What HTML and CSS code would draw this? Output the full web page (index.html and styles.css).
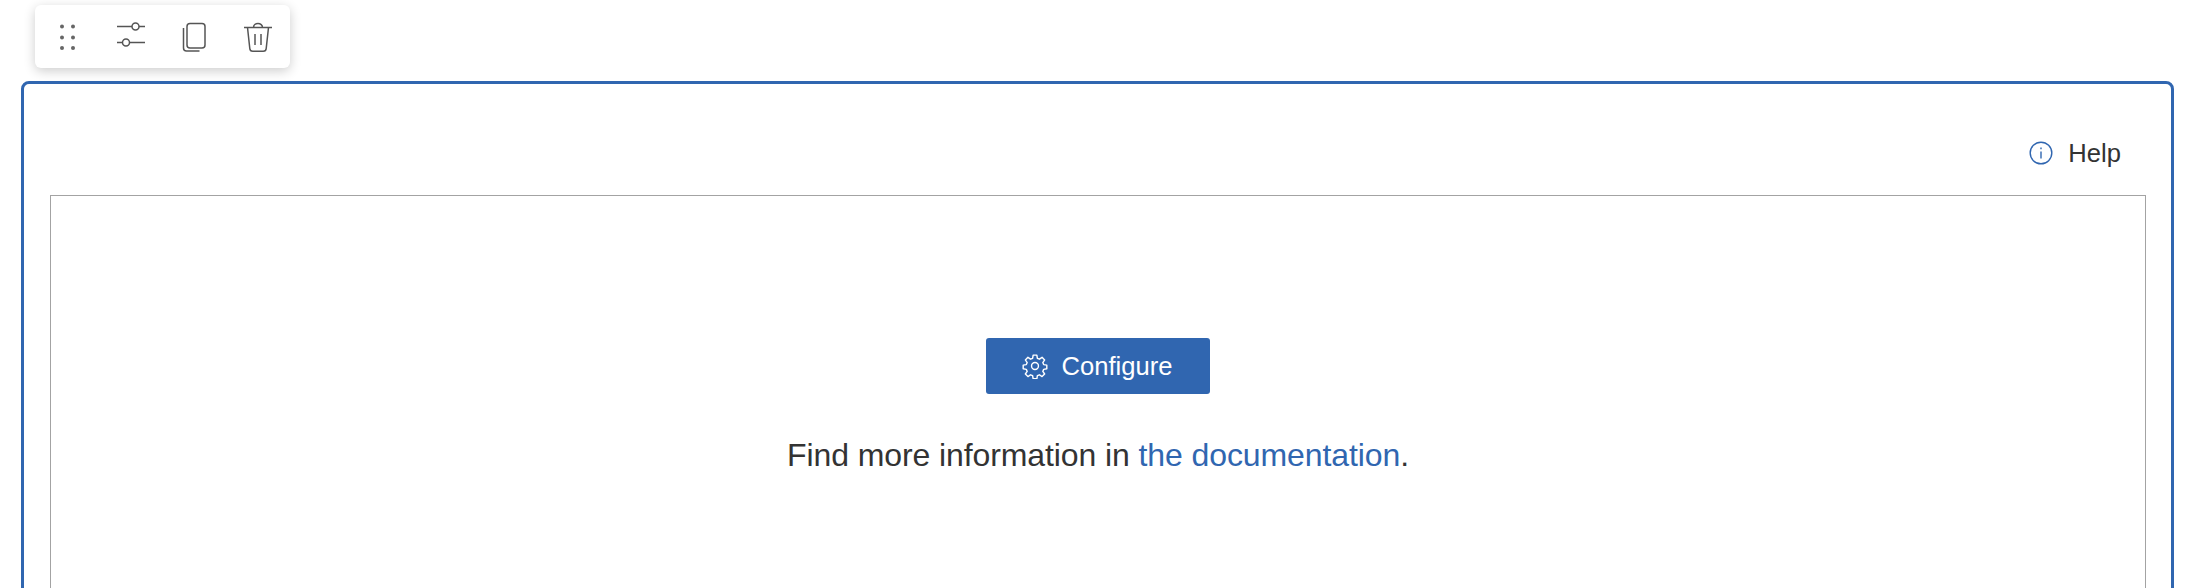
FILE: index.html
```html
<!DOCTYPE html>
<html lang="en">
<head>
    <meta charset="UTF-8">
    <title>Configure block</title>
    <link rel="stylesheet" href="styles.css">
</head>
<body>

    <!-- Block toolbar -->
    <div class="toolbar">
        <span class="tool">
            <svg width="32" height="32" viewBox="0 0 32 32" fill="#666">
                <circle cx="11" cy="5.500" r="2"/><circle cx="22" cy="5.500" r="2"/>
                <circle cx="11" cy="16.500" r="2"/><circle cx="22" cy="16.500" r="2"/>
                <circle cx="11" cy="27" r="2"/><circle cx="22" cy="27" r="2"/>
            </svg>
        </span>
        <span class="tool">
            <svg width="32" height="32" viewBox="0 0 32 32" fill="none" stroke="#555" stroke-width="1.5">
                <path d="M2 5.500h15M24 5.500h6M2 21.500h6M14 21.500h16"/>
                <circle cx="20.500" cy="5.500" r="3.500"/><circle cx="11" cy="21.500" r="3.500"/>
            </svg>
        </span>
        <span class="tool">
            <svg width="32" height="32" viewBox="0 0 32 32" fill="none" stroke="#555" stroke-width="1.5">
                <rect x="9" y="2.500" width="18" height="24.500" rx="3"/>
                <path d="M5.500 7v20a3 3 0 0 0 3 3h13"/>
            </svg>
        </span>
        <span class="tool">
            <svg width="32" height="32" viewBox="0 0 32 32" fill="none" stroke="#555" stroke-width="1.5">
                <path d="M2 6.500h28M11.500 6.500a4.500 4 0 0 1 9 0M5.500 6.500l2.300 21a3 3 0 0 0 3 2.800h10.400a3 3 0 0 0 3-2.800l2.300-21"/>
                <path d="M13 13v11M19 13v11"/>
            </svg>
        </span>
    </div>

    <!-- Block -->
    <div class="block">
        <div class="help-row">
            <a class="help">
                <svg width="24" height="24" viewBox="0 0 24 24" fill="none" stroke="#3066b0" stroke-width="1.4">
                    <circle cx="12" cy="12" r="10.800"/>
                    <path d="M12 10.500v7"/>
                    <path d="M12 6.500v1.800"/>
                </svg>
                <span>Help</span>
            </a>
        </div>
        <div class="preview">
            <button class="configure">
                <svg width="26" height="26" viewBox="0 0 24 24" fill="none" stroke="#fff" stroke-width="1.3" stroke-linejoin="round">
                    <circle cx="12" cy="12" r="3.200"/>
                    <path d="M10.300 2h3.400l.5 2.900 1.900.8 2.400-1.700 2.400 2.400-1.700 2.400.8 1.900 2.900.5v3.400l-2.900.5-.8 1.900 1.700 2.400-2.400 2.400-2.400-1.700-1.900.8-.5 2.900h-3.400l-.5-2.900-1.900-.8-2.400 1.700-2.400-2.400 1.700-2.400-.8-1.900-2.900-.5v-3.400l2.900-.5.8-1.900-1.700-2.400 2.400-2.400 2.400 1.700 1.900-.8z"/>
                </svg>
                <span>Configure</span>
            </button>
            <p class="more">Find more information in <a class="doc-link">the documentation</a>.</p>
        </div>
    </div>

</body>
</html>
```

FILE: styles.css
```css
html, body { height: 100%; overflow: hidden; }
body { margin: 0; background: #fff; color: #333; font-family: "Liberation Sans", Arial, sans-serif; }

.toolbar { display: grid; grid-template-columns: repeat(4, 1fr); align-items: center; width: 255px; height: 63px; margin: 5px 0 0 35px; background: #fff; border-radius: 6px; box-shadow: 0 3px 12px rgba(0,0,0,0.2); }
.tool { display: flex; justify-content: center; }
.tool svg { display: block; }

.block { margin: 13px 30px 0 21px; padding: 0 25px 0 26px; height: 600px; border: 3px solid #3066b0; border-radius: 8px; }
.help-row { display: flex; justify-content: flex-end; height: 111px; padding-right: 25px; box-sizing: border-box; padding-top: 54px; }
.help { display: flex; align-items: center; gap: 15px; height: 30px; font-size: 25.6px; }
.help svg { display: block; }

.preview { display: flex; flex-direction: column; align-items: center; height: 500px; padding-top: 142px; box-sizing: border-box; border: 1px solid #a3a3a3; }
.configure { display: flex; align-items: center; justify-content: center; gap: 14px; width: 224px; height: 56px; padding: 0 2px 0 0; background: #3066b0; color: #fff; border: 0; border-radius: 3px; font-family: inherit; font-size: 25.6px; }
.configure svg { display: block; }
.more { margin: 43px 0 0; font-size: 32px; line-height: 36px; letter-spacing: -0.1px; }
.doc-link { color: #3066b0; }
```
